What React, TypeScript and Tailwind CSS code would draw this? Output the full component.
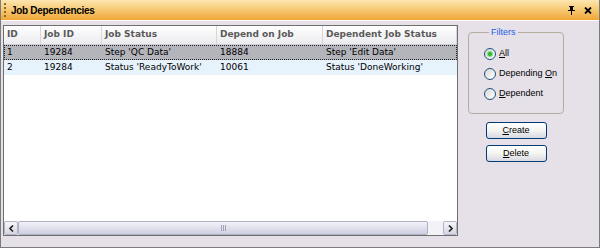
const rows = [
  { id: "1", job: "19284", status: "Step 'QC Data'", dep: "18884", depStatus: "Step 'Edit Data'" },
  { id: "2", job: "19284", status: "Status 'ReadyToWork'", dep: "10061", depStatus: "Status 'DoneWorking'" },
];

const cols = [
  { label: "ID", w: "w-[37px]" },
  { label: "Job ID", w: "w-[61px]" },
  { label: "Job Status", w: "w-[115px]" },
  { label: "Depend on Job", w: "w-[106px]" },
  { label: "Dependent Job Status", w: "flex-1" },
];

function Radio({ checked, label, u }: { checked?: boolean; label: string; u: number }) {
  return (
    <div className="flex items-center gap-[3px] h-[20px] whitespace-nowrap">
      <span className="w-[12px] h-[12px] shrink-0 rounded-full border border-[#1c5180] bg-gradient-to-br from-[#d8d8d2] to-white flex items-center justify-center">
        {checked && <span className="w-[4px] h-[4px] rounded-full bg-[#2cb82c] shadow-[0_0_1px_1px_#7fd67f]" />}
      </span>
      <span>
        {label.slice(0, u)}
        <span className="underline">{label[u]}</span>
        {label.slice(u + 1)}
      </span>
    </div>
  );
}

function Btn({ label }: { label: string }) {
  return (
    <button className="w-[61px] h-[17px] rounded-[3px] border border-[#003c74] bg-gradient-to-b from-white via-[#f4f4f0] to-[#d8d8e4] text-black leading-none">
      <span className="underline">{label[0]}</span>
      {label.slice(1)}
    </button>
  );
}

export default function App() {
  return (
    <div className="w-[600px] h-[248px] bg-[#e6e1e8] border-x border-b border-[#7b7b7b] flex flex-col">
      {/* title bar */}
      <div className="h-[21px] shrink-0 bg-gradient-to-b from-[#fde6b0] via-[#f6c870] to-[#efa632] border-b border-white flex items-center pl-[3px] pr-[7px]">
        <div className="h-[14px] border-l-2 border-dotted border-[#8a6a30] mr-[5px]" />
        <span className="flex-1 font-bold text-black text-[10px] tracking-[-0.3px] font-['Liberation_Sans',sans-serif]">
          Job Dependencies
        </span>
        <svg width="7" height="9" viewBox="0 0 7 9" className="mr-[9px]">
          <path d="M1 0h5v1H5v3h2v1H4v4H3V5H0V4h2V1H1z" fill="#000" />
        </svg>
        <svg width="8" height="7" viewBox="0 0 8 7">
          <path d="M1 0.5l6 6M7 0.5l-6 6" stroke="#000" strokeWidth="1.8" />
        </svg>
      </div>

      <div className="flex flex-1 pt-[4px] pb-[11px] pl-[2px]">
        {/* grid */}
        <div className="w-[455px] border border-[#6f6f6f] bg-white flex flex-col">
          <div className="flex h-[19px] shrink-0 bg-gradient-to-b from-white to-[#ebebee] border-b border-[#d0d0d8] text-[#5a5a5a] font-bold text-[9px] font-['DejaVu_Sans',sans-serif]">
            {cols.map((c) => (
              <div key={c.label} className={`${c.w} border-r border-[#d6d6de] pl-[3px] flex items-center whitespace-nowrap overflow-hidden`}>
                {c.label}
              </div>
            ))}
          </div>
          {rows.map((r, i) => (
            <div
              key={r.id}
              className={`flex h-[15px] text-[9px] text-black font-['DejaVu_Sans',sans-serif] ${
                i === 0 ? "bg-[#b4b4bb] outline-1 outline-dotted outline-[#222] -outline-offset-1" : "bg-[#e6f2fc]"
              }`}
            >
              {[r.id, r.job, r.status, r.dep, r.depStatus].map((v, j) => (
                <div key={j} className={`${cols[j].w} pl-[3px] flex items-center whitespace-nowrap overflow-hidden`}>
                  {v}
                </div>
              ))}
            </div>
          ))}
          <div className="flex-1" />
          {/* horizontal scrollbar */}
          <div className="h-[14px] shrink-0 flex bg-[#f3f3f7]">
            <div className="w-[14px] border border-[#b4b4c6] rounded-[2px] bg-gradient-to-b from-[#f6f6fa] to-[#d6d6e4] flex items-center justify-center">
              <svg width="5" height="7" viewBox="0 0 5 7">
                <path d="M4 0.5L1 3.5l3 3" stroke="#222" strokeWidth="1.6" fill="none" />
              </svg>
            </div>
            <div className="w-[410px] border border-[#aeb0c4] rounded-[2px] bg-gradient-to-b from-[#f2f2f8] to-[#cdd0e0] flex items-center justify-center gap-[1px]">
              <span className="w-px h-[6px] bg-[#a0a2b8]" />
              <span className="w-px h-[6px] bg-[#a0a2b8]" />
              <span className="w-px h-[6px] bg-[#a0a2b8]" />
            </div>
            <div className="flex-1" />
            <div className="w-[14px] border border-[#b4b4c6] rounded-[2px] bg-gradient-to-b from-[#f6f6fa] to-[#d6d6e4] flex items-center justify-center">
              <svg width="5" height="7" viewBox="0 0 5 7">
                <path d="M1 0.5l3 3-3 3" stroke="#222" strokeWidth="1.6" fill="none" />
              </svg>
            </div>
          </div>
        </div>

        {/* side panel */}
        <div className="flex flex-col items-start pl-[10px] pt-[1px] font-['Liberation_Sans',sans-serif] text-[9px] text-black">
          <fieldset className="w-[96px] h-[88px] border border-[#b2ad9e] rounded-[4px] pl-[15px] pr-0 pt-[6px] m-0">
            <legend className="text-[#1d5ee6] px-[2px] ml-[5px] text-[9px] leading-[12px]">Filters</legend>
            <Radio checked label="All" u={0} />
            <Radio label="Depending On" u={10} />
            <Radio label="Dependent" u={0} />
          </fieldset>
          <div className="w-[96px] flex flex-col items-center gap-[6px] mt-[8px]">
            <Btn label="Create" />
            <Btn label="Delete" />
          </div>
        </div>
      </div>
    </div>
  );
}
